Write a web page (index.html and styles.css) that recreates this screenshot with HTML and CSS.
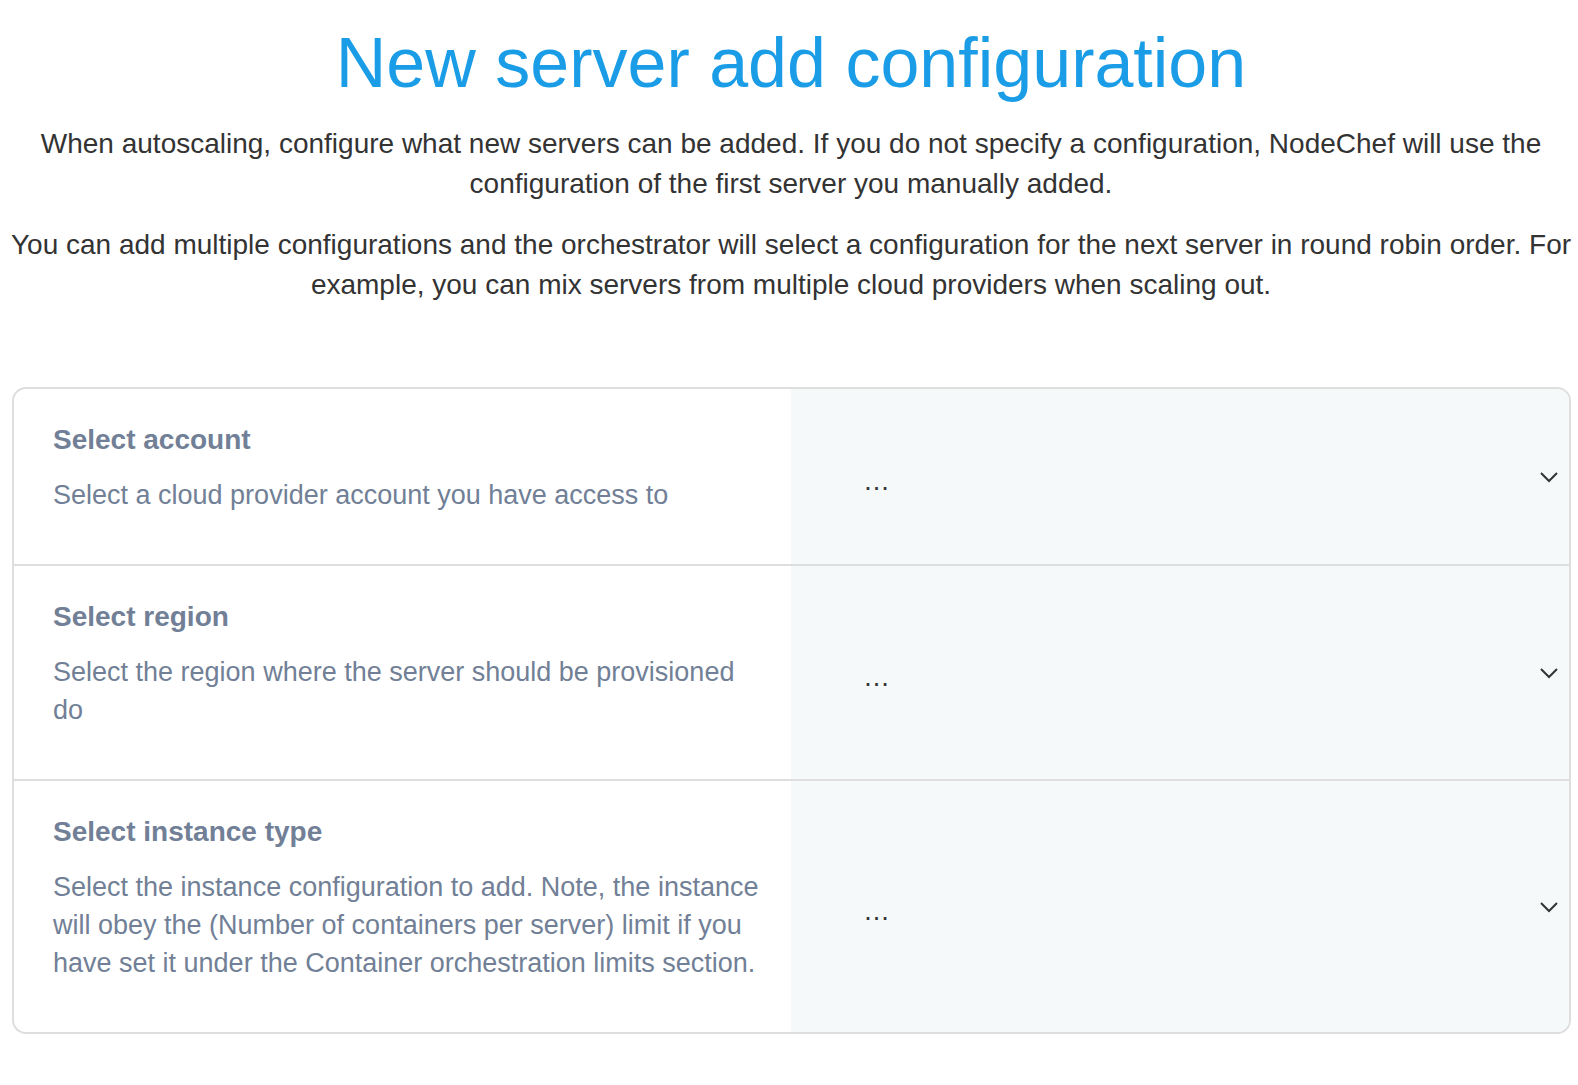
FILE: index.html
```html
<!DOCTYPE html>
<html lang="en">

<head>
    <meta charset="UTF-8">
    <meta name="viewport" content="width=device-width, initial-scale=1.0">
    <title>New server add configuration</title>
    <link rel="stylesheet" href="styles.css">
</head>

<body>
<div class="page">
    <h1 class="ht">New server add configuration</h1>
    <p class="intro">When autoscaling, configure what new servers can be added. If you do not specify a configuration, NodeChef will use the configuration of the first server you manually added.</p>
    <p class="intro">You can add multiple configurations and the orchestrator will select a configuration for the next server in round robin order. For example, you can mix servers from multiple cloud providers when scaling out.</p>

    <div class="card">
        <div class="row">
            <div class="info">
                <div class="lbl">Select account</div>
                <div class="desc">Select a cloud provider account you have access to</div>
            </div>
            <div class="pick">
                <span class="val">…</span>
                <svg class="chev" width="20" height="12" viewBox="0 0 20 12"><path d="M2 2 L10 10 L18 2" fill="none" stroke="#333" stroke-width="2"/></svg>
            </div>
        </div>
        <div class="row">
            <div class="info">
                <div class="lbl">Select region</div>
                <div class="desc">Select the region where the server should be provisioned do</div>
            </div>
            <div class="pick">
                <span class="val">…</span>
                <svg class="chev" width="20" height="12" viewBox="0 0 20 12"><path d="M2 2 L10 10 L18 2" fill="none" stroke="#333" stroke-width="2"/></svg>
            </div>
        </div>
        <div class="row">
            <div class="info">
                <div class="lbl">Select instance type</div>
                <div class="desc">Select the instance configuration to add. Note, the instance will obey the (Number of containers per server) limit if you have set it under the Container orchestration limits section.</div>
            </div>
            <div class="pick">
                <span class="val">…</span>
                <svg class="chev" width="20" height="12" viewBox="0 0 20 12"><path d="M2 2 L10 10 L18 2" fill="none" stroke="#333" stroke-width="2"/></svg>
            </div>
        </div>
    </div>
</div>
</body>

</html>
```

FILE: styles.css
```css
body {
    margin: 0;
    font-family: "Liberation Sans", Arial, sans-serif;
    background: #fff;
}

.page {
    padding: 0 2px 20px 6px;
}

.ht {
    margin: 21px 0 19px 0;
    text-align: center;
    color: #1a9de6;
    font-size: 70px;
    font-weight: normal;
    line-height: 84px;
}

.intro {
    margin: 0 0 21px 0;
    text-align: center;
    color: #333;
    font-size: 28px;
    line-height: 40px;
}

.card {
    margin: 82px 5px 0 6px;
    border: 2px solid #dedede;
    border-radius: 14px;
    overflow: hidden;
}

.row {
    display: flex;
    border-top: 2px solid #dedede;
}

.row:first-child {
    border-top: none;
}

.info {
    width: 706px;
    padding: 36px 32px 50px 39px;
    flex: none;
}

.lbl {
    color: #718096;
    font-size: 28px;
    font-weight: bold;
    line-height: 30px;
}

.desc {
    margin-top: 21px;
    color: #718096;
    font-size: 27px;
    line-height: 38px;
}

.pick {
    flex: 1;
    display: flex;
    align-items: center;
    background: #f5f9fa;
    padding: 0 10px 0 72px;
}

.val {
    flex: 1;
    color: #333;
    font-size: 27px;
    padding-top: 10px;
}

.chev {
    display: block;
}
```
